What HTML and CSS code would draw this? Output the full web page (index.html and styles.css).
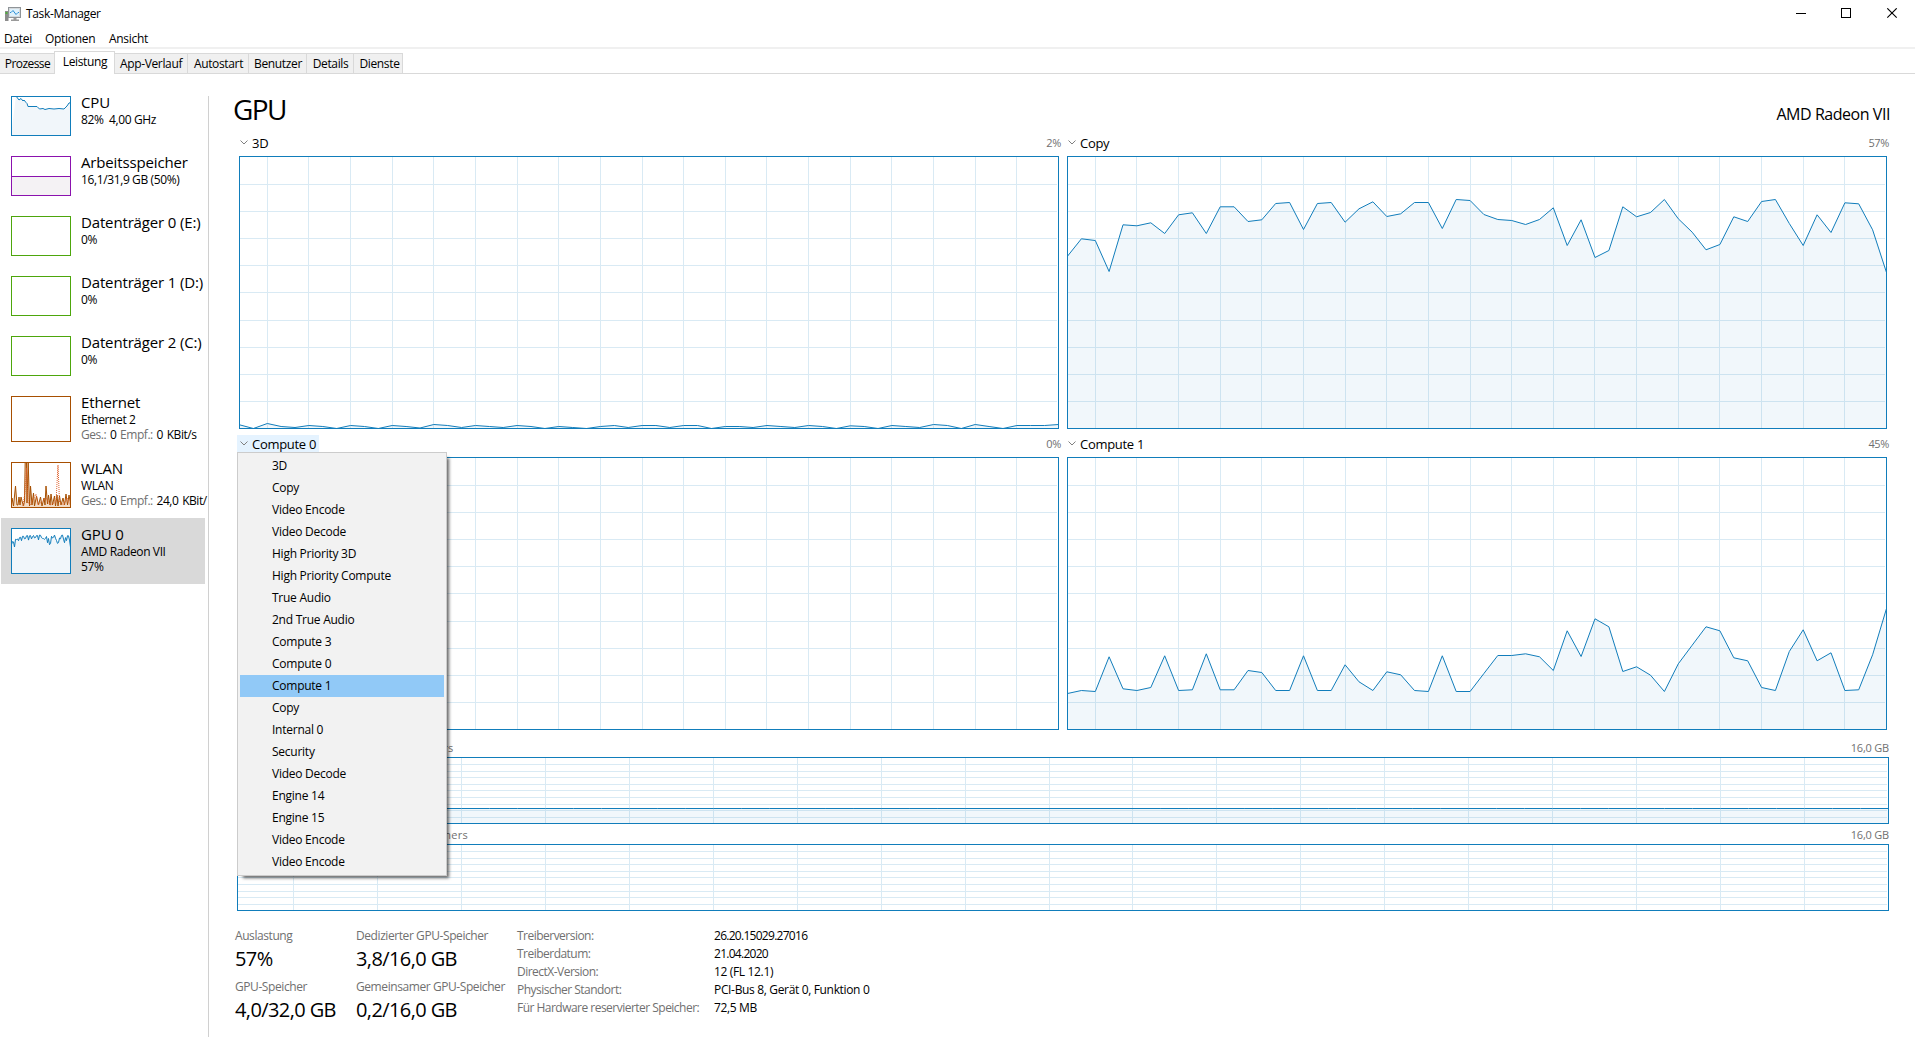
FILE: index.html
```html
<!DOCTYPE html>
<html lang="de">
<head>
  <meta charset="UTF-8">
  <meta name="viewport" content="width=device-width, initial-scale=1.0">
  <title>Task-Manager</title>
  <link rel="stylesheet" href="styles.css">
</head>
<body>

  <header class="titlebar">
    <svg class="app-icon" width="17" height="15" viewBox="0 0 17 15">
      <rect x="0" y="4" width="3.5" height="10" fill="#8c8c8c"/>
      <rect x="0.5" y="5" width="2" height="2" fill="#4fae3c"/>
      <rect x="3.5" y="0.5" width="12" height="10" fill="#d5d9dc" stroke="#8f9498"/>
      <rect x="5" y="2" width="9" height="7" fill="#dff1fb"/>
      <path d="M5 5.5h1l2-2 3 4 2-2h1" fill="none" stroke="#2a8dd4"/>
      <path d="M8.5 11h3v1.5h2.5V14H6v-1.5h2.5z" fill="#9a9a9a"/>
    </svg>
    <span class="app-title">Task-Manager</span>
    <svg class="win-buttons" width="102" height="12" viewBox="0 0 102 12">
      <path d="M0 5.5h10" stroke="#000"/>
      <rect x="45.5" y="0.5" width="9" height="9" fill="none" stroke="#000"/>
      <path d="M91.3 0.3l9.4 9.4M100.7 0.3l-9.4 9.4" stroke="#000" stroke-width="1.1"/>
    </svg>
  </header>

  <nav class="menubar">
    <span class="m-datei">Datei</span>
    <span class="m-optionen">Optionen</span>
    <span>Ansicht</span>
  </nav>

  <div class="tabs">
    <div class="tab t-prozesse">Prozesse</div>
    <div class="tab active">Leistung</div>
    <div class="tab t-verlauf">App-Verlauf</div>
    <div class="tab t-autostart">Autostart</div>
    <div class="tab t-benutzer">Benutzer</div>
    <div class="tab t-details">Details</div>
    <div class="tab t-dienste">Dienste</div>
  </div>

  <div class="content">
    <aside class="sidebar">
      <div class="item">
        <svg class="thumb" data-thumb="cpu" width="60" height="40"></svg>
        <div class="info">
          <div class="name">CPU</div>
          <div class="sub">82%&nbsp; 4,00 GHz</div>
        </div>
      </div>
      <div class="item">
        <svg class="thumb" data-thumb="memory" width="60" height="40"></svg>
        <div class="info">
          <div class="name">Arbeitsspeicher</div>
          <div class="sub">16,1/31,9 GB (50%)</div>
        </div>
      </div>
      <div class="item">
        <svg class="thumb" data-thumb="disk" width="60" height="40"></svg>
        <div class="info">
          <div class="name">Datenträger 0 (E:)</div>
          <div class="sub">0%</div>
        </div>
      </div>
      <div class="item">
        <svg class="thumb" data-thumb="disk" width="60" height="40"></svg>
        <div class="info">
          <div class="name">Datenträger 1 (D:)</div>
          <div class="sub">0%</div>
        </div>
      </div>
      <div class="item">
        <svg class="thumb" data-thumb="disk" width="60" height="40"></svg>
        <div class="info">
          <div class="name">Datenträger 2 (C:)</div>
          <div class="sub">0%</div>
        </div>
      </div>
      <div class="item tall">
        <svg class="thumb" data-thumb="ethernet" width="60" height="46"></svg>
        <div class="info">
          <div class="name">Ethernet</div>
          <div class="sub">Ethernet 2</div>
          <div class="sub rate"><span class="dim">Ges.:</span> 0 <span class="dim">Empf.:</span> 0 KBit/s</div>
        </div>
      </div>
      <div class="item tall">
        <svg class="thumb" data-thumb="wlan" width="60" height="46"></svg>
        <div class="info">
          <div class="name">WLAN</div>
          <div class="sub">WLAN</div>
          <div class="sub rate"><span class="dim">Ges.:</span> 0 <span class="dim">Empf.:</span> 24,0 KBit/</div>
        </div>
      </div>
      <div class="item tall selected">
        <svg class="thumb" data-thumb="gpu" width="60" height="46"></svg>
        <div class="info">
          <div class="name">GPU 0</div>
          <div class="sub">AMD Radeon VII</div>
          <div class="sub">57%</div>
        </div>
      </div>
    </aside>

    <main class="main">
      <div class="head">
        <h1>GPU</h1>
        <div class="device">AMD Radeon VII</div>
      </div>

      <div class="engines">
        <section class="engine">
          <div class="engine-head">
            <span class="engine-name"><svg class="chev" width="8" height="5" viewBox="0 0 8 5"><path d="M0.5 0.5L4 4l3.5-3.5"/></svg>3D</span>
            <span class="value">2%</span>
          </div>
          <svg class="chart" data-chart="engine3d" width="820" height="273"></svg>
        </section>
        <section class="engine">
          <div class="engine-head">
            <span class="engine-name"><svg class="chev" width="8" height="5" viewBox="0 0 8 5"><path d="M0.5 0.5L4 4l3.5-3.5"/></svg>Copy</span>
            <span class="value">57%</span>
          </div>
          <svg class="chart" data-chart="copy" width="820" height="273"></svg>
        </section>
        <section class="engine">
          <div class="engine-head">
            <span class="engine-name open"><svg class="chev" width="8" height="5" viewBox="0 0 8 5"><path d="M0.5 0.5L4 4l3.5-3.5"/></svg>Compute 0</span>
            <span class="value">0%</span>
            <ul class="popup">
              <li>3D</li>
              <li>Copy</li>
              <li>Video Encode</li>
              <li>Video Decode</li>
              <li>High Priority 3D</li>
              <li>High Priority Compute</li>
              <li>True Audio</li>
              <li>2nd True Audio</li>
              <li>Compute 3</li>
              <li>Compute 0</li>
              <li class="hover">Compute 1</li>
              <li>Copy</li>
              <li>Internal 0</li>
              <li>Security</li>
              <li>Video Decode</li>
              <li>Engine 14</li>
              <li>Engine 15</li>
              <li>Video Encode</li>
              <li>Video Encode</li>
            </ul>
          </div>
          <svg class="chart" data-chart="compute0" width="820" height="273"></svg>
        </section>
        <section class="engine">
          <div class="engine-head">
            <span class="engine-name"><svg class="chev" width="8" height="5" viewBox="0 0 8 5"><path d="M0.5 0.5L4 4l3.5-3.5"/></svg>Compute 1</span>
            <span class="value">45%</span>
          </div>
          <svg class="chart" data-chart="compute1" width="820" height="273"></svg>
        </section>
      </div>

      <section class="memory">
        <div class="memory-head"><span class="memory-name">Nutzung des dedizierten GPU-Speichers</span><span>16,0 GB</span></div>
        <svg class="chart" data-chart="dedicated" width="1652" height="67"></svg>
        <div class="memory-head second"><span class="memory-name">Nutzung des gemeinsamen GPU-Speichers</span><span>16,0 GB</span></div>
        <svg class="chart" data-chart="shared" width="1652" height="67"></svg>
      </section>

      <section class="stats">
        <div class="figures">
          <div class="figure"><div class="label">Auslastung</div><div class="number">57%</div></div>
          <div class="figure"><div class="label">Dedizierter GPU-Speicher</div><div class="number">3,8/16,0 GB</div></div>
          <div class="figure"><div class="label">GPU-Speicher</div><div class="number">4,0/32,0 GB</div></div>
          <div class="figure"><div class="label">Gemeinsamer GPU-Speicher</div><div class="number">0,2/16,0 GB</div></div>
        </div>
        <dl class="details">
          <dt>Treiberversion:</dt><dd class="digits">26.20.15029.27016</dd>
          <dt>Treiberdatum:</dt><dd class="digits">21.04.2020</dd>
          <dt>DirectX-Version:</dt><dd>12 (FL 12.1)</dd>
          <dt>Physischer Standort:</dt><dd>PCI-Bus 8, Gerät 0, Funktion 0</dd>
          <dt>Für Hardware reservierter Speicher:</dt><dd>72,5 MB</dd>
        </dl>
      </section>
    </main>
  </div>

  <script src="charts.js"></script>
</body>
</html>
```
FILE: styles.css
```css
* {
  margin: 0; padding: 0; box-sizing: border-box;
}
body {
  width: 1915px; height: 1037px;
  overflow: hidden;
  display: flex; flex-direction: column;
  background: #fff;
  color: #000;
  font-family: "Open Sans", "Noto Sans", sans-serif;
  font-size: 12px;
  line-height: 16px;
  letter-spacing: -0.35px;
}
svg { display: block; flex: none; }

/* title + menu */
.titlebar {
  height: 28px;
  display: flex; align-items: flex-start;
  padding: 7px 17px 0 5px;
}
.app-title { margin: -1px 0 0 4px; }
.win-buttons { margin: 1px 0 0 auto; }
.menubar {
  height: 21px;
  display: flex;
  padding: 3px 0 0 4px;
  border-bottom: 2px solid #f0f0f0;
  letter-spacing: -0.3px;
}
.m-datei { width: 41px; }
.m-optionen { width: 64px; }

/* tabs */
.tabs {
  height: 25px;
  display: flex; align-items: flex-end;
  border-bottom: 1px solid #d9d9d9;
}
.tab {
  height: 20px;
  padding: 2px 0 0 1px;
  background: #f0f0f0;
  border: 1px solid #d9d9d9;
  border-width: 1px 1px 0 0;
  text-align: center;
}
.tab.active {
  width: 61px; height: 23px;
  margin: 0 0 -1px -1px;
  background: #fff;
  border-left-width: 1px;
}
.t-prozesse { width: 55px; letter-spacing: -0.55px; }
.t-verlauf { width: 73px; padding-left: 0; }
.t-autostart { width: 61px; }
.t-benutzer { width: 58px; }
.t-details { width: 47px; }
.t-dienste { width: 49px; padding-left: 3px; }

.content { flex: 1; display: flex; min-height: 0; }

/* left list */
.sidebar {
  width: 209px;
  margin-top: 22px;
  border-right: 1px solid #d0d0d0;
  padding-left: 1px;
}
.item {
  width: 204px; height: 60px;
  display: flex; gap: 10px;
  padding-left: 10px;
}
.item.tall { height: 66px; }
.info {
  margin-top: -4px;
  white-space: nowrap;
}
.name {
  height: 20px;
  font-size: 15px; line-height: 20px;
  letter-spacing: -0.15px;
}
.sub { height: 15px; line-height: 15px; letter-spacing: -0.38px; }
.rate { letter-spacing: -0.46px; word-spacing: 1.1px; }
.dim { color: #707070; }
.item.selected {
  margin-top: -10px;
  padding-top: 10px;
  background: #d9d9d9;
}

/* right side */
.main { flex: 1; padding-left: 28px; }
.head {
  width: 1653px; height: 60px;
  display: flex; justify-content: space-between;
}
h1 {
  margin: 16px 0 0 -4px;
  font-size: 28px; font-weight: 400; line-height: 38px;
  letter-spacing: -1.6px;
}
.device {
  margin-top: 29px;
  font-size: 16px; line-height: 22px;
  letter-spacing: -0.45px;
}
.engines {
  display: grid;
  grid-template-columns: 822px 822px;
  gap: 6px;
}
.engine { height: 295px; }
.engine-head {
  position: relative;
  width: 824px; height: 17px;
  margin-bottom: 5px;
  display: flex; justify-content: space-between;
}
.engine-name {
  display: flex;
  padding: 0 3px;
  font-size: 13px; line-height: 19px;
  letter-spacing: -0.3px;
}
.engine-name.open { background: #e5f3ff; }
.chev { margin: 6px 4px 0 0; }
.chev path { fill: none; stroke: #808080; }
.value { font-size: 11px; line-height: 18px; color: #707070; }
.engine .chart { margin-left: 2px; }

.popup {
  position: absolute; left: 0; top: 17px; z-index: 5;
  width: 210px; height: 424px;
  padding: 2px;
  list-style: none;
  background: #f2f2f2;
  border: 1px solid #ccc;
  box-shadow: 4px 4px 3px -2px rgba(0,0,0,0.6);
}
.popup li {
  height: 22px;
  padding-left: 32px;
  line-height: 21px;
  letter-spacing: -0.25px;
}
.popup li.hover { background: #91c9f7; }

.memory { width: 1652px; margin-top: 10px; }
.memory-head {
  height: 17px;
  display: flex; justify-content: space-between;
  font-size: 11px; line-height: 16px;
  letter-spacing: -0.2px;
  color: #707070;
}
.memory-head.second { height: 20px; line-height: 22px; }
.memory-name { letter-spacing: 0.34px; }

/* numbers at the bottom */
.stats { display: flex; margin: 17px 0 0 -2px; }
.figures {
  display: grid;
  grid-template-columns: 121px 161px;
  grid-auto-rows: 51px;
}
.label, .details dt { color: #707070; }
.label { letter-spacing: -0.42px; }
.number {
  font-size: 20px; line-height: 30px;
  letter-spacing: -0.6px;
}
.details {
  display: grid;
  grid-template-columns: 197px auto;
  grid-auto-rows: 18px;
  align-content: start;
}
.details dt { letter-spacing: -0.52px; }
.details dd { letter-spacing: -0.34px; }
.details dd.digits { letter-spacing: -0.72px; }
```
FILE: charts.js
```javascript
// y offsets from the top edge of each chart, one value per second
const copy = [99.7,82.3,84,115,68.3,69.3,66.3,77,58.3,56.3,77,50.3,50.3,65,63.3,47,46,73,47,46,65.7,52.3,45.3,60,57.3,46,46,72,43,44,58,63,64,68,63,51.3,89,63.3,101,94,50.3,60.3,56,43,62.3,75.7,93.3,88,60.3,65,45,43,67,89,58.3,76,46.3,47.3,73.3,116];
const compute1 = [236,233,234,199.3,231.3,233,230,198.3,233,232.3,196.3,232.3,232.3,213,215,233,233,198.3,233,233,207.3,224.3,233,214.3,217.3,233,234,198.3,234,234,216,198,198,196.3,199.3,213,173.3,199,161.3,169.3,214,209.3,217.7,234,206.3,187.7,169.3,173.3,200.3,203.3,230,233,194,172.3,203.3,195.3,233,232.3,197.3,151];
const engine3d = [268.3,272,267,270,271,269,270,272,269,270,272,269,270,271.5,268,269,271,269,270,271,269,270,272,270,271,272,270,269,271,269,269,271,269,269,272,270,270,271,269,270,271,269,270,272,269.3,270,272,269,270,271,268,269,272,268,270,272,269,269,269,268];

const charts = {
  engine3d: engine3d,
  copy: copy,
  compute0: [],
  compute1: compute1,
  dedicated: Array(60).fill(51),
  shared: []
};

const cpuPoints = "5,0 8,4 10,2.5 12,5 13,4 15,6.5 16,7.5 17,10.5 26,10.5 28.5,13 32,12.5 34,13.5 38,12.5 43,13 48,12.5 53,13 56,10 58,7 60,6.5";
const wlanPoints = "0,45 1,36 2.5,44 4.5,24 6,43 7,43 8,35 9,43 10,35 11,39 12.5,44 13.5,39 14.2,0 15.5,0 16,41 17.2,0 18.5,44 19.5,24 21,43 22.5,31 23.5,44 25.5,34 27.5,43 29.5,35 31,44 33,36 34,43 35,24 36.5,42 37.5,33 39,43 40,32 41.5,43 43.5,34 44.5,44 46,33 47,44 48.5,34 50,43 52,36 53.5,43 55,32 56.5,43 58,33 60,44";
const wlanDashed = "12,44 14,30 15.5,6 17,40 19,43 25,32 27,43 35,36 39,43 45,40 47,3 48.5,40 53,43 56,36 59,43";
const gpuPoints = copy.map((y, i) => (i + 0.5) + "," + (y * 45 / 272).toFixed(1)).join(" ");

const thumbs = {
  cpu: { color: "#117dbb", fill: "#f1f6fa", line: cpuPoints },
  memory: { color: "#8b12ae", fill: "#f4f2f4", line: "0,20.5 60,20.5" },
  disk: { color: "#4da60c" },
  ethernet: { color: "#a74f01" },
  wlan: { color: "#a74f01", fill: "#f3dcc6", line: wlanPoints, dashed: wlanDashed },
  gpu: { color: "#117dbb", fill: "#f1f6fa", line: gpuPoints }
};

function frame(w, h, color) {
  return `<rect x="0.5" y="0.5" width="${w - 1}" height="${h - 1}" fill="none" stroke="${color}"/>`;
}

function drawChart(svg) {
  const w = +svg.getAttribute("width");
  const h = +svg.getAttribute("height");
  const data = charts[svg.dataset.chart];
  const dx = (w - 1) / 59;

  // grid: a vertical line every 3 seconds, a horizontal one every 10%
  let grid = "";
  for (let i = 2; i < 59; i += 3) {
    grid += `M${Math.round(i * dx) + 0.5} 1V${h - 1}`;
  }
  for (let i = 1; i < 10; i++) {
    grid += `M1 ${Math.ceil(i * (h - 1) / 10) + 0.5}H${w - 2}`;
  }
  let out = `<rect width="${w}" height="${h}" fill="#fff"/><path d="${grid}" stroke="#d9eaf4" fill="none"/>`;
  if (data.length) {
    const pts = data.map((y, i) => (i * dx + 0.5).toFixed(1) + "," + (y + 0.5)).join(" ");
    out += `<polygon points="0.5,${h} ${pts} ${w - 0.5},${h}" fill="#117dbb" fill-opacity="0.06"/>`;
    out += `<polyline points="${pts}" fill="none" stroke="#117dbb"/>`;
  }
  svg.innerHTML = out + frame(w, h, "#117dbb");
}

function drawThumb(svg) {
  const w = +svg.getAttribute("width");
  const h = +svg.getAttribute("height");
  const t = thumbs[svg.dataset.thumb];
  let out = `<rect width="${w}" height="${h}" fill="#fff"/>`;
  if (t.line) {
    out += `<polygon points="0,${h} ${t.line} ${w},${h}" fill="${t.fill}"/>`;
    out += `<polyline points="${t.line}" fill="none" stroke="${t.color}"/>`;
  }
  if (t.dashed) {
    out += `<polyline points="${t.dashed}" fill="none" stroke="#e2602a" stroke-dasharray="1 1"/>`;
  }
  svg.innerHTML = out + frame(w, h, t.color);
}

document.querySelectorAll("[data-chart]").forEach(drawChart);
document.querySelectorAll("[data-thumb]").forEach(drawThumb);
```
